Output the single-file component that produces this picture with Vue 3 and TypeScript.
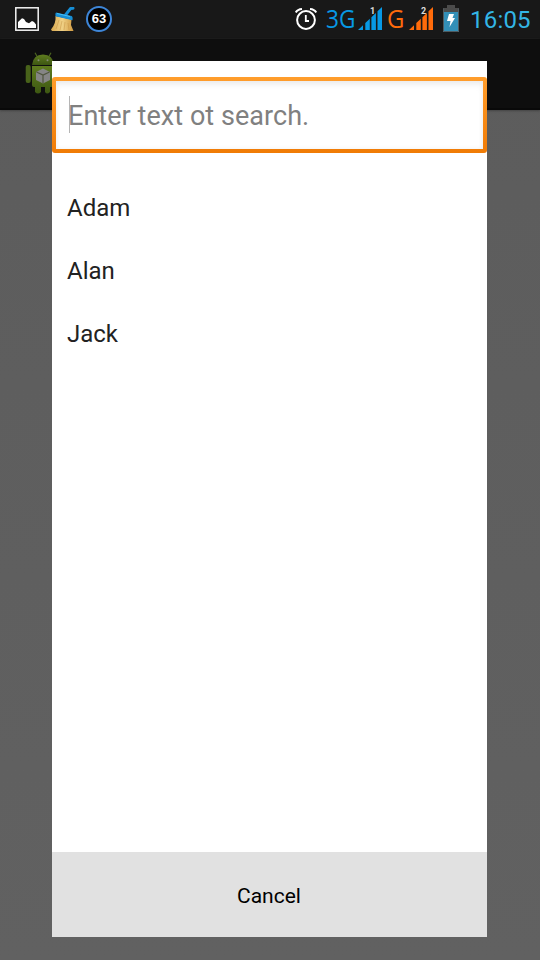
<script setup lang="ts">
import { ref } from 'vue'

const names = ref<string[]>(['Adam', 'Alan', 'Jack'])
const query = ref('')
</script>

<template>
  <div class="screen">
    <header class="status">
      <svg class="picture" width="24" height="24" viewBox="0 0 24 24">
        <rect x=".8" y=".8" width="22.4" height="22.4" fill="none" stroke="#f4f4f4" stroke-width="1.5" />
        <path d="M3 21V15L7 11.3L9 12L11 15L14 16.3L17 14L19 15L21 17.5V21Z" fill="#fff" />
      </svg>
      <svg class="broom" width="24" height="25" viewBox="0 0 24 25">
        <defs>
          <linearGradient id="straw" x1="0" x2="1">
            <stop offset="0" stop-color="#d9a94f" />
            <stop offset=".5" stop-color="#f0d186" />
            <stop offset="1" stop-color="#d09a42" />
          </linearGradient>
        </defs>
        <path d="M4.5 9L20.5 12.500L20 18L22.500 24H1L0 22.500C3.500 18 5 14 4.500 9Z" fill="url(#straw)" />
        <path d="M8 13L5 22M11 14L9 23M14 15L13 23M17 16L18 23" stroke="#c59245" stroke-width=".5" />
        <path d="M14.500 8L19.500 1.600L22 1.200" fill="none" stroke="#168ed6" stroke-width="3" stroke-linecap="round" stroke-linejoin="round" />
        <path d="M5 5.500L20.500 9Q22 9.500 21.500 13.300L4.500 9.300Q4 6 5 5.500Z" fill="#168ed6" />
        <path d="M6 6.500L19 9.500" fill="none" stroke="#46bff4" />
      </svg>
      <span class="badge">63</span>
      <svg class="alarm" width="22" height="23" viewBox="0 0 22 23" fill="none" stroke="#fff">
        <circle cx="11" cy="13" r="8.9" stroke-width="2" />
        <path d="M10.800 8V14H14" stroke-width="1.8" />
        <path d="M.8 5.500Q2.500 2.200 7 1.900M21.200 5.500Q19.500 2.200 15 1.900" stroke-width="2" />
      </svg>
      <span class="network blue">3G</span>
      <svg class="signal" width="24" height="23" viewBox="0 0 24 23">
        <path d="M0 23L5 18.200V23ZM7.300 16L11.800 11.700V23H7.300ZM13.400 10.200L17.900 5.900V23H13.400ZM19.500 4.300L24 0V23H19.500Z" fill="#0799e5" />
        <text x="12" y="7">1</text>
      </svg>
      <span class="network orange">G</span>
      <svg class="signal second" width="24" height="23" viewBox="0 0 24 23">
        <path d="M0 23L5 18.200V23ZM7.300 16L11.800 11.700V23H7.300ZM13.400 10.200L17.900 5.900V23H13.400ZM19.500 4.300L24 0V23H19.500Z" fill="#ff6b0b" />
        <text x="12" y="7">2</text>
      </svg>
      <svg class="battery" width="16" height="27" viewBox="0 0 16 27">
        <path d="M4 0H12V3H16V8H0V3H4Z" fill="#4b4b4b" />
        <path d="M0 7H16V27H0Z" fill="#338fb7" />
        <path d="M.5 3.500V26.500H15.500V3.500" fill="none" stroke="#505b60" />
        <path d="M6 9H11L9.500 13H12L6.500 22L7.500 16H4Z" fill="#fff" />
      </svg>
      <time class="clock">16:05</time>
    </header>

    <div class="actionbar">
      <svg width="36" height="44" viewBox="0 0 36 44">
        <defs>
          <linearGradient id="robot" x2="0" y2="1">
            <stop offset="0" stop-color="#5f7c1f" />
            <stop offset="1" stop-color="#3d5712" />
          </linearGradient>
        </defs>
        <path d="M10 .8L13 6M26 .8L23 6" stroke="#4c6420" stroke-width="1.2" />
        <path d="M7 13Q8 2.500 18 2.500T29 13Z" fill="url(#robot)" />
        <path d="M7 14H29V33Q29 35 27 35H25V40Q22 43 20 40V35H16V40Q13 43 10 40V35H9Q7 35 7 33Z" fill="url(#robot)" />
        <rect x=".7" y="13" width="5" height="18" rx="2" fill="#48621a" />
        <rect x="30.500" y="13" width="5" height="18" rx="2" fill="#48621a" />
        <circle cx="13.500" cy="8.300" r="1" fill="#858b78" />
        <circle cx="22.500" cy="8.300" r="1" fill="#858b78" />
        <path d="M18 16.500L25 20V28L18 31.500L11 28V20Z" fill="#858585" />
        <path d="M11.500 20L18 23L24.500 20M18 23V31" fill="none" stroke="#50563e" stroke-width="1.2" />
      </svg>
    </div>

    <main class="dialog">
      <div class="field">
        <input v-model="query" type="text" placeholder="Enter text ot search." />
        <i class="caret"></i>
      </div>
      <ul class="names">
        <li v-for="name in names" :key="name">{{ name }}</li>
      </ul>
      <button type="button" class="cancel">Cancel</button>
    </main>
  </div>
</template>

<style scoped>
.screen {
  position: relative;
  width: 540px;
  height: 960px;
  overflow: hidden;
  background: linear-gradient(#5c5c5c, #5f5f5f 60%, #616161);
  font-family: Roboto, sans-serif;
}
.status {
  display: flex;
  align-items: flex-start;
  height: 39px;
  box-sizing: border-box;
  padding: 7px 0 0 15px;
  background: #181818;
}
.status > * { flex: none; }
.broom { margin-left: 12px; }
.badge {
  width: 26px;
  height: 26px;
  margin: -1px 0 0 11px;
  box-sizing: border-box;
  border: 2px solid #3e86d8;
  border-radius: 50%;
  background: #000;
  color: #fff;
  font: 700 13px/22px "Liberation Sans", sans-serif;
  text-align: center;
}
.alarm { margin-left: 183px; }
.network {
  font: 400 26px/22px "Open Sans", sans-serif;
  transform-origin: left center;
  white-space: nowrap;
}
.blue { width: 28px; margin-left: 9px; color: #0799e5; transform: scaleX(.87); }
.orange { width: 17px; margin-left: 5px; color: #ff6b0b; transform: scaleX(.92); }
.signal { margin-left: 4px; overflow: visible; }
.second { margin-left: 5px; }
.signal text { fill: #ddd; font: 700 9px Roboto, sans-serif; }
.battery { margin: -2px 0 0 10px; }
.clock {
  margin-left: 11px;
  color: #33b5e5;
  font-size: 24px;
  line-height: 26px;
  letter-spacing: 0.2px;
  white-space: nowrap;
}
.actionbar {
  height: 71px;
  box-sizing: border-box;
  padding: 13px 0 0 25px;
  background: #0e0e0e;
  border-bottom: 2px solid #090909;
  box-shadow: 0 1px 2px #444;
}
.actionbar svg { display: block; }
.dialog {
  position: absolute;
  left: 52px;
  top: 61px;
  width: 435px;
  height: 876px;
  box-sizing: border-box;
  padding-top: 16px;
  display: flex;
  flex-direction: column;
  background: #fff;
}
.field {
  position: relative;
  height: 76px;
  flex: none;
  box-sizing: border-box;
  padding: 4px;
  border-radius: 3px;
  background: linear-gradient(#ff9d2c, #f07b05);
}
input {
  display: block;
  width: 100%;
  height: 68px;
  box-sizing: border-box;
  border: 0;
  border-radius: 0;
  outline: 0;
  padding: 2px 12px 0;
  background: #fff;
  box-shadow: inset 0 5px 8px -3px #e7e7e7, inset 0 0 5px #f1f1f1;
  color: #222;
  font: 400 27px/36px Roboto, sans-serif;
  letter-spacing: 0.05px;
}
input::placeholder { color: #808080; opacity: 1; }
.caret {
  position: absolute;
  left: 17px;
  top: 19px;
  width: 1px;
  height: 37px;
  background: #b5b5b5;
}
.names {
  flex: 1;
  margin: 0;
  padding: 24px 0 0 15px;
  list-style: none;
}
.names li {
  height: 63px;
  color: #222;
  font-size: 24px;
  line-height: 63px;
}
.cancel {
  height: 85px;
  flex: none;
  border: 0;
  padding: 3px 1px 0 0;
  background: #e1e1e1;
  color: #000;
  font: 400 21px/28px Roboto, sans-serif;
}
</style>

<style>
body { margin: 0; }
</style>
